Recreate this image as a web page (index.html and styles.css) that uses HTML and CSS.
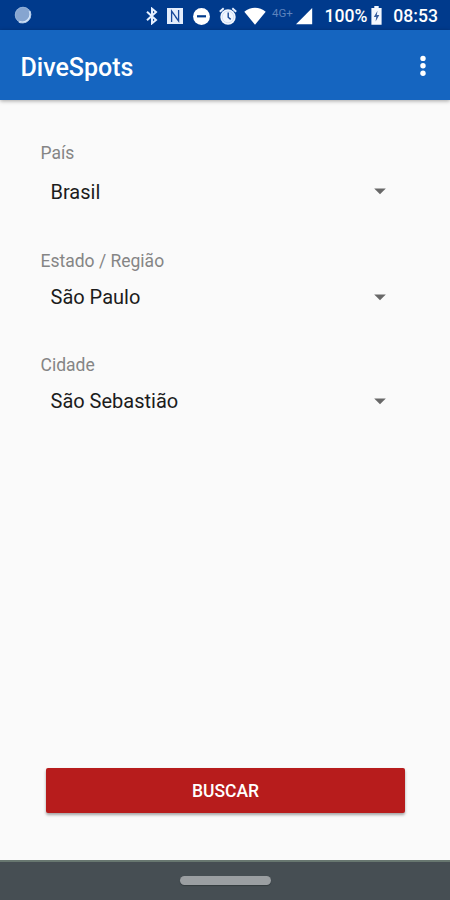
FILE: index.html
```html
<!DOCTYPE html>
<html lang="pt-BR">
<head>
<meta charset="utf-8">
<title>DiveSpots</title>
<link rel="stylesheet" href="styles.css">
</head>
<body>
<div class="screen">
  <div class="status">
    <svg class="sync" width="18" height="18" viewBox="0 0 18 18"><circle cx="9" cy="9" r="8" fill="#86a5d0"/><path d="M15.5 5A8 8 0 0 1 5 15.6" fill="none" stroke="#d9e9fb" stroke-width="1.8"/><circle cx="9" cy="9" r="7.8" fill="none" stroke="#9fbbe0" stroke-width=".7"/></svg>
    <div class="indicators">
      <svg width="12" height="18" viewBox="0 0 12 18"><path d="M1 4.8 10 13 6 16.3V1.7L10 5 1 13.2" fill="none" stroke="#e6f0ff" stroke-width="2"/></svg>
      <svg class="nfc" width="16" height="16" viewBox="0 0 16 16"><path d="M0 0H16V16H0Z" fill="#e4edfc"/><path d="M4.6 14V3L10.2 10.8M11.6 2V13L8.5 8.8" fill="none" stroke="#18489a" stroke-width="1.3"/></svg>
      <svg class="dnd" width="17" height="17" viewBox="0 0 17 17"><circle cx="8.5" cy="8.5" r="8.4" fill="#fff"/><path d="M4 8.3H13" stroke="#003a8c" stroke-width="2.2"/></svg>
      <svg class="alarm" width="18" height="18" viewBox="0 0 18 18"><circle cx="9" cy="10" r="7.7" fill="#f0f6ff"/><path d="M.8 4.7 4.7 1.3M17.2 4.7 13.3 1.3" stroke="#e6f0ff" stroke-width="2"/><path d="M9.2 5.5V10.2L11.7 12.4" fill="none" stroke="#174895" stroke-width="1.4"/><circle cx="9" cy="10" r="5.8" fill="none" stroke="#bfd0ec" stroke-width=".6"/></svg>
      <svg class="wifi" width="22" height="18" viewBox="0 0 22 18"><path d="M.3 4.7C6.5-.6 15.5-.6 21.7 4.7L11 17.8Z" fill="#fff"/></svg>
      <span class="network">4G+</span>
      <svg class="signal" width="17" height="17" viewBox="0 0 17 17"><path d="M0 16.2 16.2 0V16.2Z" fill="#fff"/></svg>
      <span class="percent">100%</span>
      <svg class="battery" width="11" height="19" viewBox="0 0 11 19"><path d="M3.3 0H7.7V2H10.6V18.7H.4V2H3.3Z" fill="#f4f8ff"/><path d="M6.5 4.7 2.8 11H5.2L4.6 15.5 8.3 9H5.8Z" fill="#385e9e"/></svg>
      <span class="clock">08:53</span>
    </div>
  </div>
  <header class="appbar">
    <h1>DiveSpots</h1>
    <svg width="8" height="22" viewBox="0 0 8 22"><g fill="#fff"><circle cx="4" cy="3.4" r="2.7"/><circle cx="4" cy="10.8" r="2.7"/><circle cx="4" cy="18.2" r="2.7"/></g></svg>
  </header>
  <main>
    <section class="field country">
      <div class="label">País</div>
      <div class="select"><span class="value">Brasil</span><svg width="12" height="7" viewBox="0 0 12 7"><path d="M.2.5H11.8L6 6.3Z" fill="#686868"/></svg></div>
    </section>
    <section class="field">
      <div class="label">Estado / Região</div>
      <div class="select"><span class="value">São Paulo</span><svg width="12" height="7" viewBox="0 0 12 7"><path d="M.2.5H11.8L6 6.3Z" fill="#686868"/></svg></div>
    </section>
    <section class="field">
      <div class="label">Cidade</div>
      <div class="select"><span class="value">São Sebastião</span><svg width="12" height="7" viewBox="0 0 12 7"><path d="M.2.5H11.8L6 6.3Z" fill="#686868"/></svg></div>
    </section>
    <button class="search"><span>BUSCAR</span></button>
  </main>
  <footer class="nav"><div class="handle"></div></footer>
</div>
</body>
</html>
```
FILE: styles.css
```css
* { box-sizing: border-box; }
body { margin: 0; font-family: Roboto, sans-serif; background: #fafafa; }
svg { display: block; flex: none; }
.screen { width: 450px; height: 900px; display: flex; flex-direction: column; overflow: hidden; }
.status { height: 30px; flex: none; background: #003a8c; display: flex; justify-content: space-between; padding: 0 12px 0 14px; color: #fff; }
.sync { margin-top: 6px; }
.indicators { width: 292px; display: flex; align-items: center; padding-top: 2px; white-space: nowrap; }
.nfc { margin-left: 9px; }
.dnd { margin-left: 10px; }
.alarm { margin-left: 9px; }
.wifi { margin-left: 7px; }
.network { width: 23px; margin-left: 6px; margin-top: -7px; font-size: 11.5px; color: #5c83bd; }
.signal { margin-left: 2px; }
.percent { width: 43px; margin-left: 11px; font-size: 17.6px; font-weight: 500; }
.battery { margin-left: 3.5px; margin-top: -2px; }
.clock { margin-left: 11.5px; font-size: 17.6px; font-weight: 500; }
.appbar { height: 70px; flex: none; background: #1565c0; display: flex; align-items: center; justify-content: space-between; padding: 1px 23px 0 20.5px; color: #fff; box-shadow: 0 1px 4px rgba(0, 0, 0, .35); position: relative; }
h1 { margin: 4px 0 0; font-size: 25px; line-height: 30px; font-weight: 500; }
main { flex: 1; display: flex; flex-direction: column; padding: 42px 45px 47px 40.5px; }
.field { height: 104px; }
.country { height: 108px; }
.label { font-size: 17.5px; line-height: 22px; color: #858585; letter-spacing: 0; }
.select { height: 30px; margin-top: 10px; padding: 0 19px 0 10px; display: flex; align-items: center; justify-content: space-between; }
.country .select { margin-top: 13px; }
.country svg { margin-top: -2px; }
.value { font-size: 20px; line-height: 28px; color: #1c1c1c; }
.search { height: 45px; margin: auto 0 0 5.5px; border: 0; border-radius: 2px; background: #b71c1c; color: #fff; font: 500 17.5px/43px Roboto, sans-serif; padding: 2px 0 0; box-shadow: 0 2px 3px rgba(0, 0, 0, .35); }
.nav { height: 40px; flex: none; background: #464e53; border-top: 2px solid #687770; display: flex; align-items: center; justify-content: center; }
.handle { width: 91px; height: 9px; margin-top: -1px; border-radius: 5px; background: #9b9fa2; box-shadow: 0 1px 1px #343c3f; }
```
